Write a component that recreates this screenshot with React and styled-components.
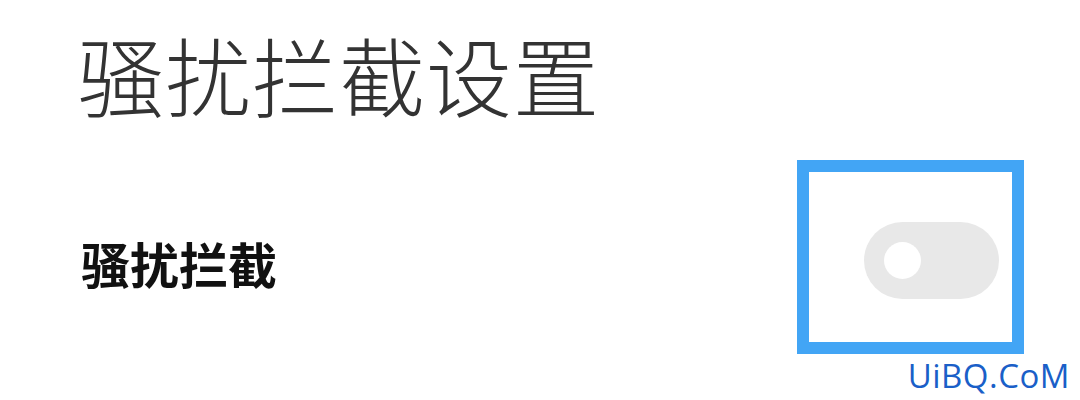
import React from "react";
import styled, { createGlobalStyle } from "styled-components";

const Global = createGlobalStyle`
  html, body { margin: 0; padding: 0; background: #ffffff; }
  body { width: 1080px; height: 400px; overflow: hidden; font-family: "Noto Sans CJK SC", "Noto Sans", sans-serif; }
`;

const Page = styled.div`
  position: relative;
  width: 1080px;
  height: 400px;
  box-sizing: border-box;
  padding: 28px 0 0 78px;
  background: #ffffff;
`;

const Title = styled.h1`
  margin: 0;
  font-family: "Noto Sans CJK SC", sans-serif;
  font-weight: 300;
  font-size: 86px;
  line-height: 92px;
  letter-spacing: 1px;
  color: #333333;
`;

const Row = styled.div`
  display: flex;
  align-items: center;
  justify-content: space-between;
  margin-top: 40px;
  padding-right: 56px;
`;

const Label = styled.div`
  font-family: "Noto Sans CJK SC", sans-serif;
  font-weight: 700;
  font-size: 49px;
  line-height: 56px;
  color: #111111;
  padding-left: 3px;
  margin-top: 12px;
`;

const Highlight = styled.div`
  box-sizing: border-box;
  width: 227px;
  height: 194px;
  border: 12px solid #42a5f5;
  padding: 50px 0 0 55px;
  display: flex;
  align-items: flex-start;
`;

const Track = styled.div`
  width: 135px;
  height: 77px;
  border-radius: 39px;
  background: #e8e8e8;
  display: flex;
  align-items: center;
  padding-left: 20px;
  box-sizing: border-box;
`;

const Knob = styled.div`
  width: 37px;
  height: 37px;
  border-radius: 50%;
  background: #ffffff;
`;

const Watermark = styled.div`
  position: absolute;
  right: 10px;
  bottom: 6px;
  font-family: "Open Sans", "Liberation Sans", sans-serif;
  font-size: 33px;
  line-height: 36px;
  color: #1a5fc8;
  letter-spacing: 0.5px;
`;

export default function App() {
  return (
    <>
      <Global />
      <Page>
        <Title>骚扰拦截设置</Title>
        <Row>
          <Label>骚扰拦截</Label>
          <Highlight>
            <Track>
              <Knob />
            </Track>
          </Highlight>
        </Row>
        <Watermark>UiBQ.CoM</Watermark>
      </Page>
    </>
  );
}
